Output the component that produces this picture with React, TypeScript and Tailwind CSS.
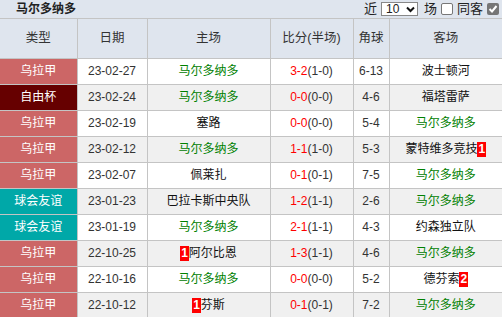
import React from 'react';

type Row = {
  type: string;
  typeBg: string;
  date: string;
  home: string;
  homeGreen?: boolean;
  homeBadge?: string;
  score: string;
  half: string;
  corner: string;
  away: string;
  awayGreen?: boolean;
  awayBadge?: string;
};

const rows: Row[] = [
  { type: '乌拉甲', typeBg: 'bg-[#cc6666]', date: '23-02-27', home: '马尔多纳多', homeGreen: true, score: '3-2', half: '(1-0)', corner: '6-13', away: '波士顿河' },
  { type: '自由杯', typeBg: 'bg-[#660000]', date: '23-02-24', home: '马尔多纳多', homeGreen: true, score: '0-0', half: '(0-0)', corner: '4-6', away: '福塔雷萨' },
  { type: '乌拉甲', typeBg: 'bg-[#cc6666]', date: '23-02-19', home: '塞路', score: '0-0', half: '(0-0)', corner: '5-4', away: '马尔多纳多', awayGreen: true },
  { type: '乌拉甲', typeBg: 'bg-[#cc6666]', date: '23-02-12', home: '马尔多纳多', homeGreen: true, score: '1-1', half: '(1-0)', corner: '5-3', away: '蒙特维多竞技', awayBadge: '1' },
  { type: '乌拉甲', typeBg: 'bg-[#cc6666]', date: '23-02-07', home: '佩莱扎', score: '0-1', half: '(0-1)', corner: '7-5', away: '马尔多纳多', awayGreen: true },
  { type: '球会友谊', typeBg: 'bg-[#00a8a8]', date: '23-01-23', home: '巴拉卡斯中央队', score: '1-2', half: '(1-1)', corner: '2-6', away: '马尔多纳多', awayGreen: true },
  { type: '球会友谊', typeBg: 'bg-[#00a8a8]', date: '23-01-19', home: '马尔多纳多', homeGreen: true, score: '2-1', half: '(1-1)', corner: '4-3', away: '约森独立队' },
  { type: '乌拉甲', typeBg: 'bg-[#cc6666]', date: '22-10-25', home: '阿尔比恩', homeBadge: '1', score: '1-3', half: '(1-1)', corner: '4-6', away: '马尔多纳多', awayGreen: true },
  { type: '乌拉甲', typeBg: 'bg-[#cc6666]', date: '22-10-16', home: '马尔多纳多', homeGreen: true, score: '0-0', half: '(0-0)', corner: '5-2', away: '德芬索', awayBadge: '2' },
  { type: '乌拉甲', typeBg: 'bg-[#cc6666]', date: '22-10-12', home: '芬斯', homeBadge: '1', score: '0-1', half: '(0-1)', corner: '7-2', away: '马尔多纳多', awayGreen: true },
];

const Badge = ({ n }: { n: string }) => (
  <span className="inline-block bg-[#ff0000] text-white font-bold leading-[15px] px-[1px] align-middle">{n}</span>
);

const Team = ({ name, green, badge, badgeLeft }: { name: string; green?: boolean; badge?: string; badgeLeft?: boolean }) => (
  <span className={green ? 'text-[#008000]' : 'text-[#111]'}>
    {badge && badgeLeft && <Badge n={badge} />}
    {name}
    {badge && !badgeLeft && <Badge n={badge} />}
  </span>
);

export default function App() {
  return (
    <div className="w-[502px] h-[317px] overflow-hidden bg-white text-[12px] text-[#333]" style={{ fontFamily: '"Liberation Sans", "Noto Sans CJK SC", sans-serif' }}>
      <div className="h-[19px] flex items-center justify-between bg-[#dfe5ee] border-b border-[#c4c4c4] whitespace-nowrap">
        <span className="pl-[16px] font-bold text-[#222]">马尔多纳多</span>
        <div className="flex items-center gap-[4px] text-[#222] text-[13px] pr-[3px]">
          <span>近</span>
          <div className="w-[37px] h-[14px] bg-white border border-[#888] flex items-center justify-between pl-[4px] pr-[2px] text-[12px]">
            <span>10</span>
            <svg width="9" height="7" viewBox="0 0 9 7"><path d="M1 1.5 L4.5 5 L8 1.5" stroke="#111" strokeWidth="2" fill="none" /></svg>
          </div>
          <span className="ml-[2px]">场</span>
          <span className="w-[12px] h-[12px] bg-white border border-[#777] rounded-[2px]" />
          <span>同客</span>
          <span className="w-[12px] h-[12px] bg-[#767676] rounded-[2px] flex items-center justify-center">
            <svg width="10" height="10" viewBox="0 0 10 10"><path d="M1.5 5 L4 7.5 L8.5 2" stroke="#fff" strokeWidth="2" fill="none" /></svg>
          </span>
        </div>
      </div>
      <table className="w-[502px] table-fixed border-collapse text-center">
        <colgroup>
          <col className="w-[77px]" />
          <col className="w-[70px]" />
          <col className="w-[123px]" />
          <col className="w-[83px]" />
          <col className="w-[36px]" />
          <col className="w-[113px]" />
        </colgroup>
        <thead>
          <tr className="h-[39px] bg-[#dfe5ee] text-[#333] text-[12.5px]">
            <th className="font-normal border-r border-b border-[#c4c4c4]">类型</th>
            <th className="font-normal border-r border-b border-[#c4c4c4]">日期</th>
            <th className="font-normal border-r border-b border-[#c4c4c4]">主场</th>
            <th className="font-normal border-r border-b border-[#c4c4c4]">比分(半场)</th>
            <th className="font-normal border-r border-b border-[#c4c4c4]">角球</th>
            <th className="font-normal border-b border-[#c4c4c4]">客场</th>
          </tr>
        </thead>
        <tbody>
          {rows.map((r, i) => (
            <tr key={i} className={`h-[26px] ${i % 2 === 1 ? 'bg-[#f0f0f0]' : 'bg-white'}`}>
              <td className={`${r.typeBg} text-white border-r border-b border-[#c4c4c4]`}>{r.type}</td>
              <td className="border-r border-b border-[#c4c4c4]">{r.date}</td>
              <td className="border-r border-b border-[#c4c4c4] whitespace-nowrap">
                <Team name={r.home} green={r.homeGreen} badge={r.homeBadge} badgeLeft />
              </td>
              <td className="border-r border-b border-[#c4c4c4]">
                <span className="text-[#ff0000]">{r.score}</span>
                <span className="text-[#333]">{r.half}</span>
              </td>
              <td className="border-r border-b border-[#c4c4c4]">{r.corner}</td>
              <td className="border-b border-[#c4c4c4] whitespace-nowrap">
                <Team name={r.away} green={r.awayGreen} badge={r.awayBadge} />
              </td>
            </tr>
          ))}
        </tbody>
      </table>
    </div>
  );
}
